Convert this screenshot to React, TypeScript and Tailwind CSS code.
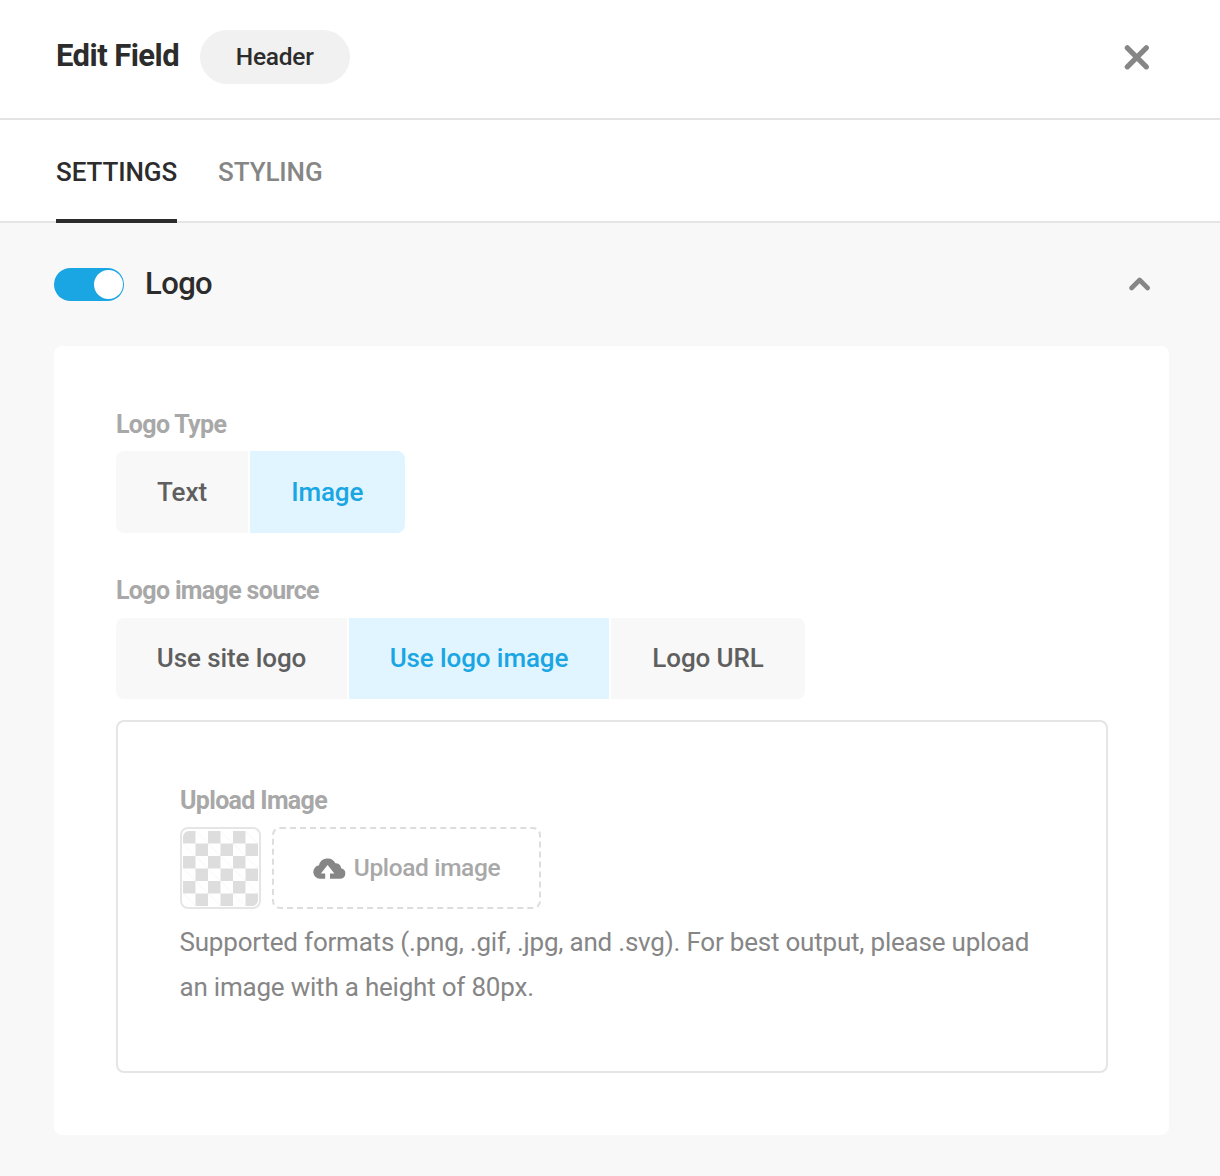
import { useState } from "react";
import { cva } from "class-variance-authority";
import { clsx } from "clsx";

const segment = cva(
  "pb-px text-[26px] leading-[30px] font-medium tracking-[-0.1px] first:rounded-l-lg last:rounded-r-lg",
  {
    variants: {
      active: {
        true: "bg-[#e0f5ff] text-[#1aa5e3]",
        false: "bg-[#f8f8f8] text-[#5f5f5f]",
      },
    },
  }
);

interface SegmentOption {
  label: string;
  width: string;
}

interface SegmentedControlProps {
  options: SegmentOption[];
  value: string;
  onChange: (value: string) => void;
}

const LOGO_TYPES: SegmentOption[] = [
  { label: "Text", width: "w-[132px]" },
  { label: "Image", width: "w-[154.5px]" },
];

const LOGO_SOURCES: SegmentOption[] = [
  { label: "Use site logo", width: "w-[231px]" },
  { label: "Use logo image", width: "w-[260px]" },
  { label: "Logo URL", width: "w-[194px]" },
];

function CloseIcon() {
  return (
    <svg width="26" height="26" viewBox="0 0 26 26" fill="none">
      <path d="M3.3 3.8L22.3 22.8M22.3 3.8L3.3 22.8" stroke="currentColor" strokeWidth="5.2" strokeLinecap="round" />
    </svg>
  );
}

function ChevronUpIcon() {
  return (
    <svg width="22" height="14" viewBox="0 0 22 14" fill="none">
      <path
        d="M2.6 11L10.6 3L18.6 11"
        stroke="currentColor"
        strokeWidth="4.6"
        strokeLinecap="round"
        strokeLinejoin="round"
      />
    </svg>
  );
}

function CloudUploadIcon() {
  return (
    <svg width="33" height="21" viewBox="0 0 33 21" fill="currentColor">
      <path d="M12.2 20.8H6.8A6.8 6.8 0 0 1 6 7.3A8.8 8.8 0 0 1 22.4 5.2A6 6 0 0 1 28.2 10.2A5.4 5.4 0 0 1 27.6 20.8H17V15.6H21.4L14.6 6.9L7.9 15.6H12.2Z" />
    </svg>
  );
}

function Checkerboard() {
  const cells = [0, 1, 2, 3, 4, 5];

  return (
    <svg width="75" height="75" viewBox="0 0 75 75" className="shrink-0 rounded-md">
      {cells.map((row) =>
        cells.map((col) =>
          (row + col) % 2 === 0 ? (
            <rect key={`${row}-${col}`} x={col * 12.5} y={row * 12.5} width="12.5" height="12.5" fill="#dddddd" />
          ) : (
            <path
              key={`${row}-${col}`}
              d={`M${col * 12.5} ${row * 12.5}l12.5 12.5`}
              stroke="#f6f6f6"
              strokeWidth="1"
            />
          )
        )
      )}
    </svg>
  );
}

function FieldLabel({ children }: { children: React.ReactNode }) {
  return <div className="text-[25px] leading-[30px] font-bold tracking-[-0.67px] text-[#a8a8a8]">{children}</div>;
}

function SegmentedControl({ options, value, onChange }: SegmentedControlProps) {
  return (
    <div className="flex h-full gap-0.5">
      {options.map((option) => (
        <button
          key={option.label}
          onClick={() => onChange(option.label)}
          className={clsx(segment({ active: option.label === value }), option.width)}
        >
          {option.label}
        </button>
      ))}
    </div>
  );
}

export default function App() {
  const [tab, setTab] = useState("SETTINGS");
  const [enabled, setEnabled] = useState(true);
  const [logoType, setLogoType] = useState("Image");
  const [source, setSource] = useState("Use logo image");

  return (
    <div className="h-[1176px] w-[1220px] overflow-hidden bg-[#f8f8f8] font-[Roboto,sans-serif] text-[#2c2c2c]">
      {/* Header */}
      <header className="flex h-[120px] items-center border-b-2 border-[#e3e3e3] bg-white pr-[70px] pb-1 pl-14">
        <h1 className="w-[123.5px] pb-0.5 text-[31px] leading-9 font-bold tracking-[-0.55px] whitespace-nowrap">
          Edit Field
        </h1>
        <span className="ml-5 flex h-[54px] w-[150.5px] items-center justify-center rounded-full bg-[#f1f1f1] pb-px text-[24.5px] leading-[30px] font-medium tracking-[-0.25px]">
          Header
        </span>
        <button className="ml-auto text-[#868686]" aria-label="Close">
          <CloseIcon />
        </button>
      </header>

      {/* Tabs */}
      <nav className="flex h-[103px] gap-[41px] border-b-2 border-[#e5e5e5] bg-white pl-14">
        {["SETTINGS", "STYLING"].map((name) => (
          <button
            key={name}
            onClick={() => setTab(name)}
            className={clsx(
              "-mb-0.5 border-b-4 pt-[5px] text-[26px] leading-[30px] font-medium tracking-[-0.1px]",
              tab === name ? "border-[#2c2c2c]" : "border-transparent text-[#868686]"
            )}
          >
            {name}
          </button>
        ))}
      </nav>

      {/* Logo section */}
      <section className="pr-[51px] pl-[54px]">
        <div className="flex h-[123px] items-center">
          <button
            role="switch"
            aria-checked={enabled}
            aria-label="Logo"
            onClick={() => setEnabled(!enabled)}
            className={clsx(
              "flex h-[33px] w-[70px] items-center rounded-full p-0.5 pr-px",
              enabled ? "justify-end bg-[#1aa5e3]" : "justify-start bg-[#cccccc]"
            )}
          >
            <span className="size-[29px] rounded-full bg-white" />
          </button>
          <h2 className="ml-[21px] pb-0.5 text-[31px] leading-9 font-medium tracking-[-0.6px]">Logo</h2>
          <span className="mr-[18.5px] ml-auto pb-0.5 text-[#868686]">
            <ChevronUpIcon />
          </span>
        </div>

        <div className="h-[789px] rounded-lg bg-white px-[62px] pt-16">
          <FieldLabel>Logo Type</FieldLabel>
          <div className="mt-[11px] h-[82px]">
            <SegmentedControl options={LOGO_TYPES} value={logoType} onChange={setLogoType} />
          </div>

          <div className="mt-[43px]">
            <FieldLabel>Logo image source</FieldLabel>
          </div>
          <div className="mt-3 h-[81px]">
            <SegmentedControl options={LOGO_SOURCES} value={source} onChange={setSource} />
          </div>

          <div className="mt-[21px] h-[353px] w-[992px] rounded-lg border-2 border-[#e5e5e5] px-[62px] pt-16">
            <FieldLabel>Upload Image</FieldLabel>
            <div className="mt-[11px] flex gap-[11px]">
              <div className="flex h-[82px] w-[81px] items-center justify-center rounded-lg border-2 border-[#e5e5e5]">
                <Checkerboard />
              </div>
              <button className="flex h-[82px] w-[269px] items-center justify-center gap-2 rounded-lg border-2 border-dashed border-[#dddddd] text-[24.5px] leading-[30px] font-medium tracking-[-0.36px] text-[#a8a8a8]">
                <span className="text-[#868686]">
                  <CloudUploadIcon />
                </span>
                Upload image
              </button>
            </div>
            <p className="-ml-[0.5px] mt-[11px] text-[26px] leading-[45px] tracking-[-0.21px] whitespace-nowrap text-[#868686]">
              Supported formats (.png, .gif, .jpg, and .svg). For best output, please upload
              <br />
              an image with a height of 80px.
            </p>
          </div>
        </div>
      </section>
    </div>
  );
}
